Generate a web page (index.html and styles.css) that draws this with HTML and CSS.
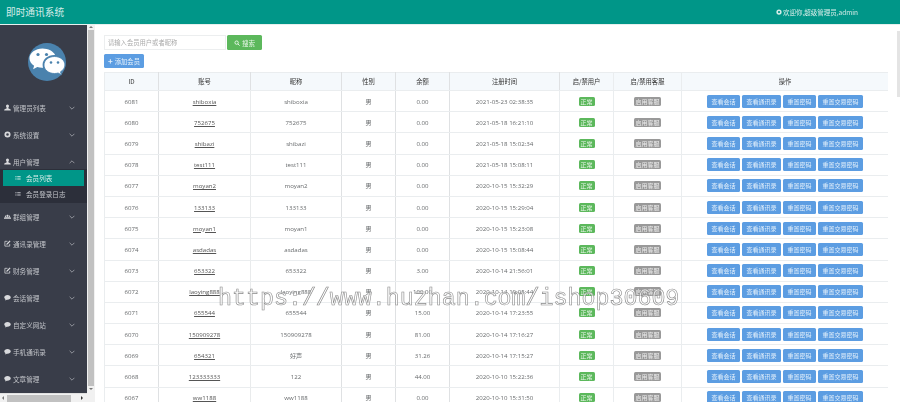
FILE: index.html
```html
<!DOCTYPE html>
<html lang="zh">
<head>
<meta charset="utf-8">
<title>即时通讯系统</title>
<link rel="stylesheet" href="styles.css">
</head>
<body>
<svg class="defs" width="0" height="0">
<symbol id="i-user" viewBox="0 0 16 16"><path d="M8 1c2.2 0 3.4 1.7 3.4 3.8 0 1.6-.7 3-1.6 3.8v1.2l4.4 2c.9.4 1.3 1 1.3 1.7V15H.5v-1.5c0-.7.4-1.3 1.3-1.7l4.4-2V8.6c-.9-.8-1.6-2.2-1.6-3.8C4.6 2.7 5.8 1 8 1z"/></symbol>
<symbol id="i-gear" viewBox="0 0 16 16"><path fill-rule="evenodd" d="M8 1a7 7 0 1 1 0 14A7 7 0 0 1 8 1zm0 4a3 3 0 1 0 0 6 3 3 0 0 0 0-6z"/></symbol>
<symbol id="i-group" viewBox="0 0 16 16"><path d="M8 4c1.5 0 2.4 1.1 2.4 2.5S9.500 9 8 9 5.600 7.900 5.600 6.500 6.500 4 8 4zM3.500 5.500c1 0 1.600.8 1.600 1.700S4.500 9 3.500 9 1.900 8.100 1.900 7.200 2.500 5.500 3.500 5.500zm9 0c1 0 1.600.8 1.600 1.700S13.500 9 12.500 9s-1.600-.9-1.600-1.800.6-1.700 1.600-1.700zM0 13v-1.500C0 10.500 1.500 9.500 3 9.500h10c1.500 0 3 1 3 2V13z"/></symbol>
<symbol id="i-edit" viewBox="0 0 16 16"><path fill="none" stroke="currentColor" stroke-width="1.700" d="M13 9v5H2V3h6"/><path d="M6 8l7-7 2 2-7 7-3 1z"/></symbol>
<symbol id="i-chat" viewBox="0 0 16 16"><path d="M8 2c4 0 7.500 2.300 7.500 5.500S12 13 8 13c-.6 0-1.100 0-1.600-.1L3 15v-3.300C1.400 10.700.5 9.200.5 7.500.5 4.300 4 2 8 2z"/></symbol>
<symbol id="i-list" viewBox="0 0 16 16"><path d="M1 3h3v3H1zm5 0h9v3H6zM1 9h3v3H1zm5 0h9v3H6z"/></symbol>
<symbol id="i-down" viewBox="0 0 10 6"><path fill="none" stroke="currentColor" stroke-width="1.300" d="M1 1l4 4 4-4"/></symbol>
<symbol id="i-up" viewBox="0 0 10 6"><path fill="none" stroke="currentColor" stroke-width="1.300" d="M1 5l4-4 4 4"/></symbol>
</svg>
<div class="app">
  <header class="topbar">
    <span class="brand">即时通讯系统</span>
    <span class="welcome"><svg class="ico-welcome"><use href="#i-gear"/></svg>欢迎你,超级管理员,admin</span>
  </header>
  <div class="body-row">
    <div class="side-col">
      <div class="side-view">
        <aside class="sidebar">
          <div class="logo-box">
            <svg class="logo" viewBox="0 0 38 38">
              <circle cx="19" cy="19" r="19" fill="#4a82ad"/>
              <path fill="#fff" d="M14.500 5.500C7.600 5.500 1.500 9.800 1.500 15.300c0 3.100 1.800 5.600 4.600 7.500l-1 3.500 4.200-2.200c1.500.4 3 .6 4.700.6h1.100c-.3-1-.5-2-.5-3 0-5.500 5.200-9.800 11.500-9.800h1C25.300 8.300 20.300 5.500 14.500 5.500z"/>
              <circle cx="10" cy="11.500" r="1.600" fill="#4a82ad"/><circle cx="18.500" cy="11.500" r="1.600" fill="#4a82ad"/>
              <path fill="#fff" stroke="#4a82ad" stroke-width=".8" d="M26.500 13.500c-6 0-10.500 3.800-10.500 8.500s4.500 8.500 10.500 8.500c1.300 0 2.500-.2 3.600-.5l3.300 1.800-.9-3c2.700-1.600 4.400-4 4.400-6.800 0-4.700-4.400-8.500-10.400-8.500z"/>
              <circle cx="23" cy="19.500" r="1.300" fill="#4a82ad"/><circle cx="30" cy="19.500" r="1.300" fill="#4a82ad"/>
            </svg>
          </div>
          <nav class="menu">
            <a class="menu-item"><svg class="mi"><use href="#i-user"/></svg><span class="ml">管理员列表</span><svg class="chev"><use href="#i-down"/></svg></a>
            <a class="menu-item"><svg class="mi"><use href="#i-gear"/></svg><span class="ml">系统设置</span><svg class="chev"><use href="#i-down"/></svg></a>
            <a class="menu-item"><svg class="mi"><use href="#i-user"/></svg><span class="ml">用户管理</span><svg class="chev"><use href="#i-up"/></svg></a>
            <div class="submenu">
              <a class="sub-item active"><svg class="si"><use href="#i-list"/></svg>会员列表</a>
              <a class="sub-item"><svg class="si"><use href="#i-list"/></svg>会员登录日志</a>
            </div>
            <a class="menu-item"><svg class="mi"><use href="#i-group"/></svg><span class="ml">群组管理</span><svg class="chev"><use href="#i-down"/></svg></a>
            <a class="menu-item"><svg class="mi"><use href="#i-edit"/></svg><span class="ml">通讯录管理</span><svg class="chev"><use href="#i-down"/></svg></a>
            <a class="menu-item"><svg class="mi"><use href="#i-edit"/></svg><span class="ml">财务管理</span><svg class="chev"><use href="#i-down"/></svg></a>
            <a class="menu-item"><svg class="mi"><use href="#i-chat"/></svg><span class="ml">会话管理</span><svg class="chev"><use href="#i-down"/></svg></a>
            <a class="menu-item"><svg class="mi"><use href="#i-chat"/></svg><span class="ml">自定义网站</span><svg class="chev"><use href="#i-down"/></svg></a>
            <a class="menu-item"><svg class="mi"><use href="#i-chat"/></svg><span class="ml">手机通讯录</span><svg class="chev"><use href="#i-down"/></svg></a>
            <a class="menu-item"><svg class="mi"><use href="#i-chat"/></svg><span class="ml">文章管理</span><svg class="chev"><use href="#i-down"/></svg></a>
          </nav>
        </aside>
      </div>
      <div class="hscroll"><span class="arrow-l"></span><span class="hthumb"></span><span class="arrow-r"></span></div>
    </div>
    <div class="vscroll"><span class="arrow-u"></span><span class="vthumb"></span><span class="arrow-d"></span></div>
    <main class="content">
      <div class="search-row">
        <input class="search-input" placeholder="请输入会员用户或者昵称">
        <button class="btn-search"><svg class="ico-search" viewBox="0 0 16 16"><circle cx="7" cy="7" r="4.500" fill="none" stroke="currentColor" stroke-width="2.500"/><path d="M10.500 10.500L15 15" stroke="currentColor" stroke-width="2.500"/></svg>搜索</button>
      </div>
      <button class="btn-add"><span class="plus">+</span>添加会员</button>
      <table class="grid">
        <colgroup><col class="c1"><col class="c2"><col class="c3"><col class="c4"><col class="c5"><col class="c6"><col class="c7"><col class="c8"><col class="c9"></colgroup>
        <thead><tr><th>ID</th><th>账号</th><th>昵称</th><th>性别</th><th>余额</th><th>注册时间</th><th>启/禁用户</th><th>启/禁用客服</th><th>操作</th></tr></thead>
        <tbody>
          <tr><td>6081</td><td><a class="acct">shiboxia</a></td><td>shiboxia</td><td>男</td><td>0.00</td><td>2021-05-23 02:38:35</td><td><span class="tag ok">正常</span></td><td><span class="tag off">启用客服</span></td><td><span class="acts"><a class="act">查看会话</a><a class="act">查看通讯录</a><a class="act">重置密码</a><a class="act">重置交易密码</a></span></td></tr>
          <tr><td>6080</td><td><a class="acct">752675</a></td><td>752675</td><td>男</td><td>0.00</td><td>2021-05-18 16:21:10</td><td><span class="tag ok">正常</span></td><td><span class="tag off">启用客服</span></td><td><span class="acts"><a class="act">查看会话</a><a class="act">查看通讯录</a><a class="act">重置密码</a><a class="act">重置交易密码</a></span></td></tr>
          <tr><td>6079</td><td><a class="acct">shibazi</a></td><td>shibazi</td><td>男</td><td>0.00</td><td>2021-05-18 15:02:34</td><td><span class="tag ok">正常</span></td><td><span class="tag off">启用客服</span></td><td><span class="acts"><a class="act">查看会话</a><a class="act">查看通讯录</a><a class="act">重置密码</a><a class="act">重置交易密码</a></span></td></tr>
          <tr><td>6078</td><td><a class="acct">test111</a></td><td>test111</td><td>男</td><td>0.00</td><td>2021-05-18 15:08:11</td><td><span class="tag ok">正常</span></td><td><span class="tag off">启用客服</span></td><td><span class="acts"><a class="act">查看会话</a><a class="act">查看通讯录</a><a class="act">重置密码</a><a class="act">重置交易密码</a></span></td></tr>
          <tr><td>6077</td><td><a class="acct">moyan2</a></td><td>moyan2</td><td>男</td><td>0.00</td><td>2020-10-15 15:32:29</td><td><span class="tag ok">正常</span></td><td><span class="tag off">启用客服</span></td><td><span class="acts"><a class="act">查看会话</a><a class="act">查看通讯录</a><a class="act">重置密码</a><a class="act">重置交易密码</a></span></td></tr>
          <tr><td>6076</td><td><a class="acct">133133</a></td><td>133133</td><td>男</td><td>0.00</td><td>2020-10-15 15:29:04</td><td><span class="tag ok">正常</span></td><td><span class="tag off">启用客服</span></td><td><span class="acts"><a class="act">查看会话</a><a class="act">查看通讯录</a><a class="act">重置密码</a><a class="act">重置交易密码</a></span></td></tr>
          <tr><td>6075</td><td><a class="acct">moyan1</a></td><td>moyan1</td><td>男</td><td>0.00</td><td>2020-10-15 15:23:08</td><td><span class="tag ok">正常</span></td><td><span class="tag off">启用客服</span></td><td><span class="acts"><a class="act">查看会话</a><a class="act">查看通讯录</a><a class="act">重置密码</a><a class="act">重置交易密码</a></span></td></tr>
          <tr><td>6074</td><td><a class="acct">asdadas</a></td><td>asdadas</td><td>男</td><td>0.00</td><td>2020-10-15 15:08:44</td><td><span class="tag ok">正常</span></td><td><span class="tag off">启用客服</span></td><td><span class="acts"><a class="act">查看会话</a><a class="act">查看通讯录</a><a class="act">重置密码</a><a class="act">重置交易密码</a></span></td></tr>
          <tr><td>6073</td><td><a class="acct">653322</a></td><td>653322</td><td>男</td><td>3.00</td><td>2020-10-14 21:56:01</td><td><span class="tag ok">正常</span></td><td><span class="tag off">启用客服</span></td><td><span class="acts"><a class="act">查看会话</a><a class="act">查看通讯录</a><a class="act">重置密码</a><a class="act">重置交易密码</a></span></td></tr>
          <tr><td>6072</td><td><a class="acct">laoying888</a></td><td>laoying888</td><td>男</td><td>100.00</td><td>2020-10-14 19:05:44</td><td><span class="tag ok">正常</span></td><td><span class="tag off">启用客服</span></td><td><span class="acts"><a class="act">查看会话</a><a class="act">查看通讯录</a><a class="act">重置密码</a><a class="act">重置交易密码</a></span></td></tr>
          <tr><td>6071</td><td><a class="acct">655544</a></td><td>655544</td><td>男</td><td>15.00</td><td>2020-10-14 17:23:55</td><td><span class="tag ok">正常</span></td><td><span class="tag off">启用客服</span></td><td><span class="acts"><a class="act">查看会话</a><a class="act">查看通讯录</a><a class="act">重置密码</a><a class="act">重置交易密码</a></span></td></tr>
          <tr><td>6070</td><td><a class="acct">150909278</a></td><td>150909278</td><td>男</td><td>81.00</td><td>2020-10-14 17:16:27</td><td><span class="tag ok">正常</span></td><td><span class="tag off">启用客服</span></td><td><span class="acts"><a class="act">查看会话</a><a class="act">查看通讯录</a><a class="act">重置密码</a><a class="act">重置交易密码</a></span></td></tr>
          <tr><td>6069</td><td><a class="acct">654321</a></td><td>好声</td><td>男</td><td>31.26</td><td>2020-10-14 17:15:27</td><td><span class="tag ok">正常</span></td><td><span class="tag off">启用客服</span></td><td><span class="acts"><a class="act">查看会话</a><a class="act">查看通讯录</a><a class="act">重置密码</a><a class="act">重置交易密码</a></span></td></tr>
          <tr><td>6068</td><td><a class="acct">123333333</a></td><td>122</td><td>男</td><td>44.00</td><td>2020-10-10 15:22:36</td><td><span class="tag ok">正常</span></td><td><span class="tag off">启用客服</span></td><td><span class="acts"><a class="act">查看会话</a><a class="act">查看通讯录</a><a class="act">重置密码</a><a class="act">重置交易密码</a></span></td></tr>
          <tr><td>6067</td><td><a class="acct">ww1188</a></td><td>ww1188</td><td>男</td><td>0.00</td><td>2020-10-10 15:31:50</td><td><span class="tag ok">正常</span></td><td><span class="tag off">启用客服</span></td><td><span class="acts"><a class="act">查看会话</a><a class="act">查看通讯录</a><a class="act">重置密码</a><a class="act">重置交易密码</a></span></td></tr>
        </tbody>
      </table>
    </main>
    <div class="pagebar"><span class="pagethumb"></span></div>
  </div>
  <div class="watermark">https://www.huzhan.com/ishop30609</div>
</div>
</body>
</html>
```

FILE: styles.css
```css
* { box-sizing: border-box; }
html, body { margin: 0; padding: 0; width: 900px; height: 402px; overflow: hidden; background: #fff; }
body { font-family: "Open Sans", "Noto Sans CJK SC", sans-serif; font-size: 6.1px; color: #676a6c; }
.defs { position: absolute; }
.app { position: relative; width: 900px; height: 402px; display: flex; flex-direction: column; filter: blur(.35px); }

.topbar { height: 25px; flex: none; background: #009688; border-bottom: 1px solid #e6f0ee; display: flex; align-items: center; justify-content: space-between; padding: 0 42px 0 6px; color: #d5ece8; }
.brand { font-size: 9.700px; font-family: "Noto Sans CJK SC", sans-serif; }
.welcome { font-size: 6.500px; font-family: "Noto Sans CJK SC", sans-serif; display: flex; align-items: center; gap: 1px; }
.ico-welcome { width: 6px; height: 6px; fill: currentColor; }

.body-row { flex: 1; min-height: 0; display: flex; }
.side-col { width: 87px; flex: none; display: flex; flex-direction: column; }
.side-view { flex: 1; min-height: 0; overflow: hidden; background: #393d49; }
.sidebar { color: #c2c4c9; font-family: "Noto Sans CJK SC", sans-serif; font-size: 6.600px; }
.logo-box { height: 69px; padding: 18px 0 0 28px; }
.logo { width: 38px; height: 38px; display: block; }
.menu { display: flex; flex-direction: column; }
.menu-item { height: 27px; display: flex; align-items: center; padding: 0 12px 0 4px; }
.mi { width: 7px; height: 7px; fill: currentColor; color: #d8d9dc; margin-right: 2px; flex: none; }
.ml { flex: 1; white-space: nowrap; }
.chev { width: 6px; height: 4px; color: #a9abb2; flex: none; }
.submenu { background: #2c2f3a; margin-top: -6px; padding: 1px 3px 1px; margin-bottom: 0; height: 34px; }
.sub-item { height: 16px; display: flex; align-items: center; padding-left: 12px; margin: 0 0 0 0; white-space: nowrap; }
.sub-item.active { background: #009688; color: #d5ece8; margin-bottom: 0; }
.si { width: 6px; height: 6px; fill: currentColor; margin-right: 5px; flex: none; }

.hscroll { height: 9px; flex: none; background: #f1f1f1; display: flex; align-items: center; padding: 0 2px; border-top: 1px solid #e0e0e0; }
.hthumb { height: 7px; width: 64px; margin: 0 3px 0 3px; background: #c1c1c1; }
.arrow-l { width: 0; height: 0; border: 2px solid transparent; border-right-color: #777; border-left: 0; }
.arrow-r { width: 0; height: 0; border: 2px solid transparent; border-left-color: #333; border-right: 0; margin-left: 7px; }
.vscroll { width: 8px; flex: none; background: #f1f1f1; display: flex; flex-direction: column; align-items: center; padding: 1px 0 12px; gap: 2px; }
.vthumb { flex: 1; width: 6px; background: #c1c1c1; }
.arrow-u { width: 0; height: 0; border: 2px solid transparent; border-bottom-color: #777; border-top: 0; }
.arrow-d { width: 0; height: 0; border: 2px solid transparent; border-top-color: #777; border-bottom: 0; }

.content { flex: 1; min-width: 0; padding: 10px 0 0 9px; overflow: hidden; }
.search-row { display: flex; align-items: stretch; height: 15px; gap: 1px; }
.search-input { width: 122px; height: 15px; border: 1px solid #eceeef; padding: 0 3px; font: 6.300px "Noto Sans CJK SC", sans-serif; outline: none; color: #555; background: #fff; }
.search-input::placeholder { color: #aaa; }
.btn-search { width: 35px; border: 0; border-radius: 1.500px; background: #5cb85c; color: #e8f6e8; font: 6.500px "Noto Sans CJK SC", sans-serif; display: flex; align-items: center; justify-content: center; gap: 2px; padding: 0; }
.ico-search { width: 6px; height: 6px; }
.btn-add { display: flex; align-items: center; justify-content: center; gap: 2px; width: 40px; height: 14px; margin: 4px 0 4px; border: 0; border-radius: 1.500px; background: #5c9de2; color: #e4f0fb; font: 6.300px "Noto Sans CJK SC", sans-serif; padding: 0; }
.plus { font-size: 8px; font-weight: 700; line-height: 1; }

.grid { width: 784px; table-layout: fixed; border-collapse: collapse; text-align: center; }
.c1 { width: 54px; } .c2 { width: 92px; } .c3 { width: 91px; } .c4 { width: 54px; } .c5 { width: 54px; }
.c6 { width: 110px; } .c7 { width: 54px; } .c8 { width: 68px; } .c9 { width: 207px; }
.grid th, .grid td { border: 1px solid #eaedef; padding: 0; vertical-align: middle; white-space: nowrap; font-weight: 400; }
.grid th { height: 18px; background: #f5f9fc; color: #333; font-family: "Noto Sans CJK SC", "Open Sans", sans-serif; font-size: 6.300px; }
.grid td { height: 21.200px; }
.grid th:nth-child(-n+6), .grid td:nth-child(-n+5) { border-right-color: #dfe1e3; }
.grid td:nth-child(n+2):nth-child(-n+2) { border-right-color: #e9ebec; }
.acct { color: #555; text-decoration: underline; }
.tag { display: inline-block; height: 9px; line-height: 9px; border-radius: 1.500px; color: #e8f5e8; font-size: 6px; font-family: "Noto Sans CJK SC", sans-serif; }
.tag.ok { width: 16px; background: #5cb85c; }
.tag.off { width: 27px; background: #999; color: #eee; }
.acts { display: inline-flex; gap: 2px; }
.act { height: 13px; line-height: 13px; padding: 0 4.500px; background: #5c9de2; color: #e4f0fb; border-radius: 1.500px; font-size: 6px; font-family: "Noto Sans CJK SC", sans-serif; }

.pagebar { width: 12px; flex: none; padding-left: 9px; }
.pagethumb { display: block; width: 3px; height: 66px; margin-top: 6px; background: #e4e4e4; }

.watermark { position: absolute; left: 218px; top: 285px; font-family: "Liberation Mono", monospace; font-size: 23.300px; line-height: 28px; color: rgba(255,255,255,.55); -webkit-text-stroke: .6px #8a8a8a; white-space: nowrap; }
```
